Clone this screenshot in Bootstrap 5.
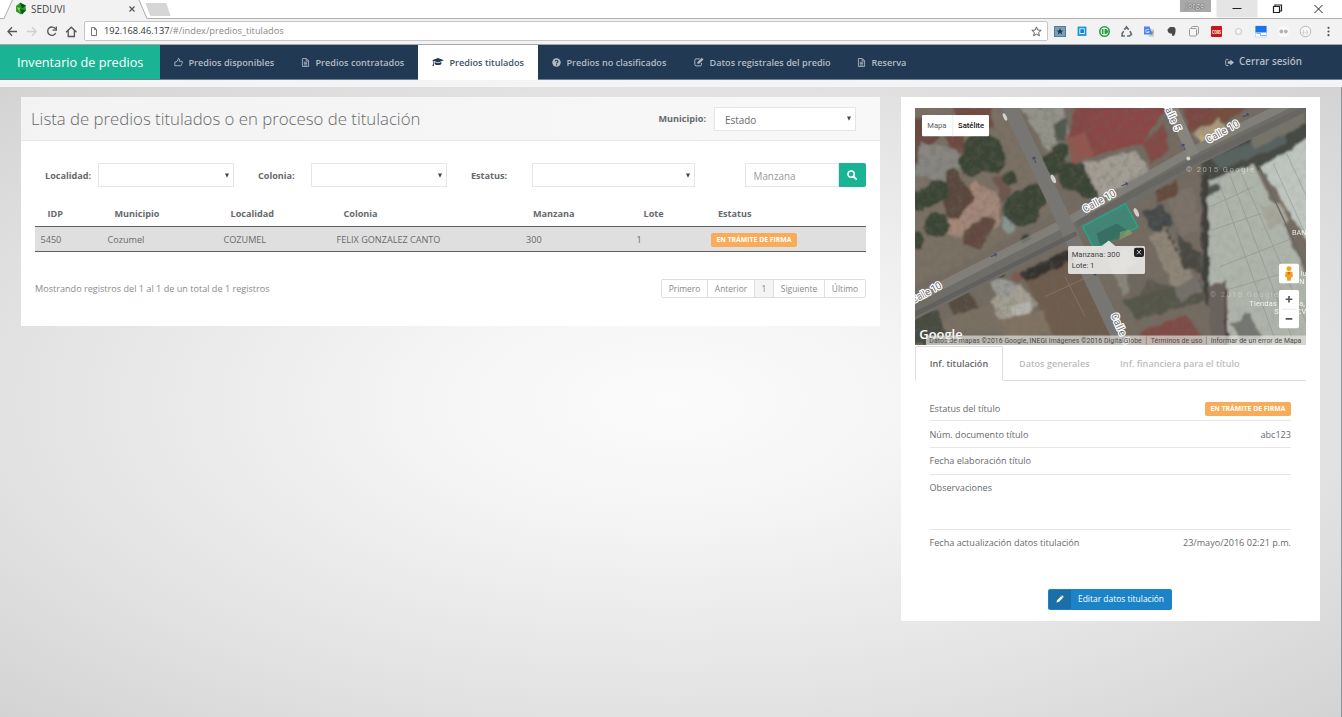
<!DOCTYPE html>
<html lang="es">
<head>
<meta charset="utf-8">
<title>SEDUVI</title>
<meta name="viewport" content="width=device-width, initial-scale=1">
<link href="https://cdn.jsdelivr.net/npm/bootstrap@5.3.0/dist/css/bootstrap.min.css" rel="stylesheet">
<style>
:root{--teal:#1ab394;--navy:#213953;--line:#e5e6e7;--ink:#676a6c}
html,body{height:100%;overflow:hidden}
body{font-family:"Open Sans","Noto Sans",sans-serif;font-size:9.1px;line-height:1.43;color:var(--ink);background:#fff;display:flex;flex-direction:column}
svg{display:block;flex:none}
/* browser frame */
.tabstrip{height:18.5px;background:#fff;border-bottom:1px solid #b0b0b0;position:relative;flex:none;padding-right:1.5px}
.tabshape{position:absolute;left:0;top:0}
.tabtext{font-size:10px;color:#444;line-height:18px;padding-left:31px;position:relative}
.wincontrols{height:17.5px}
.who{width:31px;height:12px;background:#a9a9a9;color:#f4f4f4;font-size:7.8px;line-height:11px;text-align:center;text-shadow:0 0 1px #222,0 0 1px #444}
.toolbar{height:26px;background:#f2f2f2;border-bottom:1.5px solid #a6a6a8;flex:none;padding-left:7px}
.omnibox{height:20px;background:#fff;border:1px solid #c6c6c6;border-radius:2px;margin:0 2px 0 7px;width:964px;padding:0 5px 0 6px;color:#888;font-size:9.25px}
.omnibox b{font-weight:400;color:#333}
/* application bar */
.appbar{height:35.5px;background:var(--navy);border-bottom:1px solid #6d8296;flex:none;padding:0}
.brandbox{width:160px;height:100%;background:var(--teal);color:#fff;font-size:12.7px;padding-left:17px}
.appbar .nav-link{height:34.5px;display:flex;align-items:center;font-size:9.13px;font-weight:600;color:#b3bcc5;padding:1px 0 0 14px;white-space:nowrap}
.appbar .nav-link svg{margin-right:5.5px;width:9px}
.appbar .nav-link.active{background:#fff;color:#3d5369;height:35.5px;padding-top:0}
.appbar .nav-link.active svg{color:var(--navy)}
.appbar .logout{font-size:9.8px;padding-right:40px}
.substrip{height:7px;background:#f4f4f4;flex:none}
.canvas{flex:1;background:radial-gradient(ellipse at 50% 50%,#fbfbfb 0%,#f5f5f5 25%,#e2e2e2 70%,#d3d3d3 100%);border-right:1px solid #8f959b;padding:10px 21px 0 21px}
.panel{background:#fff}
.listpanel{width:859px;height:229px}
.listhead{height:44px;background:linear-gradient(90deg,#f3f3f3,#f8f8f8);border-bottom:1px solid #e7e7e7;padding:0 24px 0 10px}
.listhead h1{font-size:16.78px;font-weight:300;margin:2px 0 0;white-space:nowrap}
.lbl{font-weight:700;white-space:nowrap}
.form-select,.form-control{height:24px;border:1px solid var(--line);border-radius:0;font-size:9.9px;color:var(--ink);padding:1px 10px 0;line-height:22px;min-height:0}
.form-select{--arr:url("data:image/svg+xml,%3Csvg xmlns='http://www.w3.org/2000/svg' viewBox='0 0 5 5'%3E%3Cpath d='M0 .3h5L2.5 5z' fill='%23444'/%3E%3C/svg%3E");background-image:var(--arr);background-size:4px 4.5px;background-position:right 4.5px center}
.form-control::placeholder{color:#9a9a9a}
.filters{height:24px;margin:22px 14px 0 24px}
.btn-go{width:27.5px;height:24px;background:var(--teal);border-radius:0 2px 2px 0;color:#fff;padding:0;display:flex;align-items:center;justify-content:center}
.grid-table{width:830.5px;margin:13px 0 0 14px;table-layout:fixed;border-collapse:collapse}
.grid-table th{height:26px;padding:1px 0 0 12.5px;font-weight:700;border-bottom:1px solid #5f6062}
.grid-table td{height:25.5px;padding:1.5px 0 0 5.5px;background:#e0dfe0;border-bottom:1px solid #5f6062}
.tag{display:inline-block;background:#f8ac59;color:#fff;font-weight:700;font-size:6.85px;line-height:14px;height:14px;width:86px;text-align:center;border-radius:2px;white-space:nowrap}
.foot{margin:26.5px 14px 0 14px;color:#8a8a8a}
.page-link{font-size:8.45px;line-height:17.5px;height:19.5px;padding:0;border-color:#dfdfdf;color:#888;text-align:center}
.page-item.active .page-link{background:#f4f4f4;border-color:#dfdfdf;color:#888}
.page-item:first-child .page-link{border-radius:2px 0 0 2px}.page-item:last-child .page-link{border-radius:0 2px 2px 0}
.sidepanel{width:419px;height:524px;padding:10.5px 14px 0 14px}
.mapbox{width:391px;height:237.5px;font-family:Roboto,sans-serif}
.nav-tabs{height:35.5px;margin-top:.5px;border-bottom:1px solid #dedede}
.nav-tabs .nav-link{font-weight:600;color:#bcbcbc;font-size:9.1px;padding:0;height:35.5px;line-height:34px;border-radius:2px 2px 0 0}
.nav-tabs .nav-link.active{width:88px;text-align:center;color:#666;border-color:#dedede #dedede #fff}
.facts{margin:15px 15px 0 14.5px}
.facts>div{height:26.6px;border-bottom:1px solid #e6e6e6}
.facts>.row-first{height:25.4px;padding-top:1px}
.facts>.tall{height:55px;padding-top:6.500px}
.btn-edit{width:124px;height:20.5px;background:#1c84c6;color:#fff;font-weight:400;font-size:8.45px;padding:0;border-radius:2px;display:flex;align-items:center;overflow:hidden;margin:33px 0 0 133px}
.btn-edit span{width:22px;height:100%;background:#1a6fa6;display:flex;align-items:center;justify-content:center}
</style>
</head>
<body>
<svg width="0" height="0" class="position-absolute">
  <symbol id="i-thumb" viewBox="0 0 16 16"><path d="M1.500 7h2.500l3-3.500.8-2.700c2 0 2.300 1.700 1.200 5H14c1 0 1.200 1.200.6 1.800.6.800.3 1.900-.4 2.200.2 1-.2 1.700-.9 1.900 0 1.400-.8 2.100-2 2.100H1.500z" fill="none" stroke="currentColor" stroke-width="1.600" stroke-linejoin="round"/></symbol>
  <symbol id="i-file" viewBox="0 0 16 16"><path d="M2.500 1h7l4 4v10h-11zM9.300 1v4.300h4.200M5 7.500h6M5 10h6M5 12.500h6" fill="none" stroke="currentColor" stroke-width="1.500"/></symbol>
  <symbol id="i-cap" viewBox="0 0 16 12"><path d="M8 0l8 3-8 3-8-3zM3.500 5.300L8 7l4.500-1.700V8c-1 1.800-8 1.800-9 0zM1.300 3.500h.9v4l.6 3H.7l.6-3z" fill="currentColor"/></symbol>
  <symbol id="i-help" viewBox="0 0 16 16"><circle cx="8" cy="8" r="7.500" fill="currentColor"/><path d="M5.600 6.200c.2-3 5.200-2.800 5 0-.1 1.700-2.500 1.700-2.500 3.600M8.100 11.300v2" fill="none" stroke="#213953" stroke-width="2"/></symbol>
  <symbol id="i-edit" viewBox="0 0 16 16"><path d="M12 9.500V12c0 1.400-.8 2.200-2.200 2.200H3.500C2.100 14.200 1.300 13.400 1.300 12V5.200C1.300 3.800 2.100 3 3.500 3H9" fill="none" stroke="currentColor" stroke-width="1.600"/><path d="M5.500 8.200L12.500 1.200l2.600 2.600-7 7H5.500z" fill="currentColor"/></symbol>
  <symbol id="i-out" viewBox="0 0 16 14"><path d="M6 1.500H3.500C2 1.500 1.200 2.300 1.200 3.800v6.400c0 1.500.8 2.300 2.300 2.300H6" fill="none" stroke="currentColor" stroke-width="1.600"/><path d="M5 4.800h4.500V1.500L16 7l-6.500 5.500V9.200H5z" fill="currentColor"/></symbol>
  <symbol id="i-search" viewBox="0 0 16 16"><circle cx="6.600" cy="6.600" r="5" fill="none" stroke="currentColor" stroke-width="2.600"/><path d="M10.400 10.400l4.200 4.200" stroke="currentColor" stroke-width="3" stroke-linecap="round"/></symbol>
  <symbol id="i-pen" viewBox="0 0 16 16"><path d="M1 15l1-4.600L10 2.400 13.600 6l-8 8zM11 1.500c.8-.8 1.600-.8 2.400 0l1.100 1.100c.8.800.8 1.600 0 2.400l-.4.400L10.600 1.900z" fill="currentColor"/></symbol>
</svg>

<header class="tabstrip d-flex justify-content-between">
  <svg class="tabshape" width="175" height="19" viewBox="0 0 175 19"><path d="M4 19L13 0H139L147 19z" fill="#f2f2f2"/><path d="M4 18.500L12.500 0M139 0l8 18.500" fill="none" stroke="#aaa"/><path d="M146 3.500h20l4 12h-19.500z" fill="#d6d6d6" stroke="#c8c8c8" stroke-width=".6"/>
    <path d="M16 6l4.500-3.500L25.500 5.500l.5 5-5 4-5-3z" fill="#2b9a2f"/><path d="M20 3l6 2.500-4 3z" fill="#0b4d1a"/><path d="M20 9l2 5.500 4-4z" fill="#0d5a1d"/><path d="M16.500 7l3.500 1-.5 4z" fill="#8fce3c"/>
    <path d="M129.500 6.500l5 5m0-5l-5 5" stroke="#555" stroke-width="1.200"/></svg>
  <div class="tabtext">SEDUVI</div>
  <div class="wincontrols d-flex">
    <div class="who">Jorge</div>
    <svg class="ms-1" width="126" height="17.500" viewBox="0 0 126 17.500"><path d="M1.500 0h41v17.500h-41z" fill="#e5e5e5"/><path d="M17.500 8.500h9" stroke="#222"/><path d="M58.500 6.500h6v6h-6zM60 6.500V5h6.500v6H65" fill="none" stroke="#222" stroke-width="1.200"/><path d="M99.500 5l8 8m0-8l-8 8" stroke="#222" stroke-width="1"/></svg>
  </div>
</header>

<div class="toolbar d-flex align-items-center">
  <svg width="70" height="18" viewBox="7 22 70 18" fill="none" stroke="#555" stroke-width="1.300"><path d="M17 31.500H8m4-4.200L8 31.500l4 4.200"/><path d="M27 31.500h9m-4-4.200l4.200 4.200L32 35.700" stroke="#cfcfcf"/><path d="M55.500 29a4.200 4.200 0 1 0 .2 4M56.300 26.500v3.700h-3.800"/><path d="M66 32.200l5.300-5L76.500 32.200M68.200 30.800v5.700h6.200v-5.700"/></svg>
  <div class="omnibox d-flex align-items-center justify-content-between flex-shrink-0">
    <div class="d-flex align-items-center"><svg width="6" height="9" viewBox="0 0 6 9" style="margin-right:7px"><path d="M.5.5h3l2 2v6h-5zM3.500.5v2h2" fill="none" stroke="#666" stroke-width=".9"/></svg><span><b>192.168.46.137</b>/#/index/predios_titulados</span></div>
    <svg width="11" height="11" viewBox="0 0 12 12"><path d="M6 1l1.400 3.400 3.700.3-2.800 2.400.9 3.600L6 8.800l-3.200 1.900.9-3.600L.9 4.700l3.700-.3z" fill="none" stroke="#555" stroke-width="1"/></svg>
  </div>
  <svg width="284" height="18" viewBox="1050 22 284 18">
    <rect x="1054.500" y="26.500" width="11" height="10" fill="#7ba0ba" stroke="#557a96"/><path d="M1060 28l1 2.500h2.600l-2.100 1.500.8 2.600-2.300-1.500-2.300 1.500.8-2.600-2.100-1.500h2.600z" fill="#1d3850"/>
    <rect x="1078.500" y="27.500" width="7" height="7.500" fill="#fff" stroke="#1597cf" stroke-width="1.800"/><rect x="1080.300" y="29.200" width="3.600" height="3.800" fill="#1680b8"/>
    <circle cx="1104.500" cy="31.500" r="4.700" fill="#fff" stroke="#21a047" stroke-width="1.600"/><rect x="1101.800" y="29" width="1.700" height="5" fill="#21a047"/><path d="M1104.500 29h1a2.500 2.500 0 0 1 0 5h-1z" fill="#21a047"/>
    <path d="M1124.300 29.800l2.200-2.800 2.200 2.800M1130 31.200l1.500 3.300-2 1.500h-2.500M1125 36h-3l.3-3 1.500-1.800" fill="none" stroke="#66707a" stroke-width="1.700"/>
    <path d="M1147 29h7v8h-5z" fill="#d2d2d2"/><path d="M1144 26.500h5.500l3 8H1144z" fill="#4c86ee"/><text x="1145" y="33" font-size="6" fill="#fff">G</text><path d="M1150 32h4m-2 0v3" stroke="#777" stroke-width=".8"/>
    <path d="M1167.500 29.500l2.500-2.500c2.500 0 5-.5 5.500 2 .3 3-.5 6.500-2 7-2 0-1-1.800-2-2.500-2 .5-4-1-4-4z" fill="#4a4a4a"/>
    <rect x="1191.500" y="26.500" width="7" height="7.500" rx="1" fill="#f6f6f6" stroke="#999"/><rect x="1189.500" y="28.500" width="7" height="7.500" rx="1" fill="#f6f6f6" stroke="#999"/>
    <rect x="1211" y="26" width="11" height="11" rx="1" fill="#c81717"/><text x="1212" y="33.500" font-size="4.800" font-weight="700" fill="#fff" textLength="9" lengthAdjust="spacingAndGlyphs">CORS</text>
    <circle cx="1238.500" cy="31.500" r="3" fill="#f4f4f4" stroke="#cfcfcf" stroke-width="1.200"/>
    <path d="M1255.500 26h11v11h-11z" fill="#fff" stroke="#a7c6f2" stroke-width=".6"/><path d="M1255.500 26h11v6.500h-11z" fill="#1a73e8"/><path d="M1256.500 33.500h4v2h5.500" fill="none" stroke="#7fb0f0" stroke-width="1"/>
    <circle cx="1283.500" cy="31.500" r="5.500" fill="#fafafa"/><circle cx="1281.300" cy="31.500" r="1.900" fill="#b3b3b3"/><circle cx="1285.800" cy="31.500" r="1.900" fill="#b3b3b3"/>
    <circle cx="1305.500" cy="31.500" r="5.300" fill="#f8f8f8" stroke="#b0b0b0" stroke-width=".9"/><text x="1302.200" y="33.500" font-size="5.500" fill="#999">{-}</text>
    <g fill="#555"><circle cx="1328.500" cy="27.800" r="1.100"/><circle cx="1328.500" cy="31.500" r="1.100"/><circle cx="1328.500" cy="35.200" r="1.100"/></g>
  </svg>
</div>

<nav class="appbar navbar navbar-expand align-items-stretch flex-nowrap">
  <div class="brandbox d-flex align-items-center">Inventario de predios</div>
  <div class="nav">
    <a class="nav-link" style="width:127px"><svg height="9"><use href="#i-thumb"/></svg>Predios disponibles</a>
    <a class="nav-link" style="width:131px"><svg height="9"><use href="#i-file"/></svg>Predios contratados</a>
    <a class="nav-link active" style="width:120px"><svg height="9" style="width:12px"><use href="#i-cap"/></svg>Predios titulados</a>
    <a class="nav-link" style="width:142px"><svg height="9"><use href="#i-help"/></svg>Predios no clasificados</a>
    <a class="nav-link" style="width:163px"><svg height="10" style="width:10px"><use href="#i-edit"/></svg>Datos registrales del predio</a>
    <a class="nav-link"><svg height="9"><use href="#i-file"/></svg>Reserva</a>
  </div>
  <div class="nav ms-auto"><a class="nav-link logout"><svg height="9"><use href="#i-out"/></svg>Cerrar sesión</a></div>
</nav>
<div class="substrip"></div>

<main class="canvas d-flex justify-content-between align-items-start">
  <section class="panel listpanel">
    <div class="listhead d-flex align-items-center">
      <h1>Lista de predios titulados o en proceso de titulación</h1>
      <label class="lbl ms-auto me-2">Municipio:</label>
      <select class="form-select flex-shrink-0" style="width:142px"><option>Estado</option></select>
    </div>
    <div class="filters d-flex align-items-center">
      <label class="lbl" style="width:53px">Localidad:</label><select class="form-select" style="width:136px"></select>
      <label class="lbl" style="width:53px;margin-left:24px">Colonia:</label><select class="form-select" style="width:136px"></select>
      <label class="lbl" style="width:61px;margin-left:24px">Estatus:</label><select class="form-select" style="width:163px"></select>
      <div class="d-flex ms-auto"><input class="form-control" style="width:94px;padding-left:8px" placeholder="Manzana"><button class="btn btn-go"><svg width="10" height="10"><use href="#i-search"/></svg></button></div>
    </div>
    <table class="grid-table">
      <colgroup><col style="width:67px"><col style="width:116px"><col style="width:113px"><col style="width:189.500px"><col style="width:110.500px"><col style="width:74.500px"><col></colgroup>
      <thead><tr><th>IDP</th><th>Municipio</th><th>Localidad</th><th>Colonia</th><th>Manzana</th><th>Lote</th><th>Estatus</th></tr></thead>
      <tbody><tr><td>5450</td><td>Cozumel</td><td>COZUMEL</td><td>FELIX GONZALEZ CANTO</td><td>300</td><td>1</td><td><span class="tag">EN TRÁMITE DE FIRMA</span></td></tr></tbody>
    </table>
    <div class="foot d-flex justify-content-between align-items-center">
      <span>Mostrando registros del 1 al 1 de un total de 1 registros</span>
      <ul class="pagination m-0">
        <li class="page-item"><a class="page-link" style="width:47px">Primero</a></li>
        <li class="page-item"><a class="page-link" style="width:48px">Anterior</a></li>
        <li class="page-item active"><a class="page-link" style="width:20px">1</a></li>
        <li class="page-item"><a class="page-link" style="width:52px">Siguiente</a></li>
        <li class="page-item"><a class="page-link" style="width:42px">Último</a></li>
      </ul>
    </div>
  </section>

  <section class="panel sidepanel">
    <svg class="mapbox" viewBox="15 23 1173 714" preserveAspectRatio="none">
      <defs>
        <filter id="soft" x="-2%" y="-2%" width="104%" height="104%"><feTurbulence type="fractalNoise" baseFrequency=".035" numOctaves="3" seed="4" result="n"/><feDisplacementMap in="SourceGraphic" in2="n" scale="18" xChannelSelector="R" yChannelSelector="G" result="d"/><feGaussianBlur in="d" stdDeviation="3"/></filter>
        <filter id="grit" x="0" y="0" width="100%" height="100%"><feTurbulence type="fractalNoise" baseFrequency=".05" numOctaves="4" seed="9"/><feColorMatrix values="0 0 0 0 .14  0 0 0 0 .14  0 0 0 0 .12  1.800 0 0 0 -.75"/></filter>
      </defs>
      <rect x="15" y="23" width="1173" height="714" fill="#746b61"/>
      <g filter="url(#soft)">
        <!-- north-west blocks -->
        <path d="M0 0h290l150 330-320 180L0 560z" fill="#7a7063"/>
        <path d="M130 20h110l10 60-110 20z" fill="#74483f"/><path d="M0 60l40-10 50 60-60 90-40 10z" fill="#6a463f"/><path d="M100 100l60 0 10 60-50-10z" fill="#6e4840"/>
        <path d="M30 125l110 20 20 50-60 50-85-20z" fill="#878680"/>
        <path d="M190 240l80 50 0 90-100 40-70-20 20-60z" fill="#a38779"/>
        <path d="M105 215l30-10 60 90-50 60-40-10z" fill="#5a463d"/><path d="M160 390l60-40 40 10-50 90-50-20z" fill="#62493f"/>
        <path d="M250 230l45-10 10 50-30 40z" fill="#6e564d"/><ellipse cx="297" cy="370" rx="22" ry="28" fill="#87958f"/>
        <g fill="#3b4434"><circle cx="215" cy="155" r="58"/><circle cx="185" cy="190" r="38"/><circle cx="250" cy="180" r="38"/><circle cx="335" cy="325" r="55"/><circle cx="375" cy="290" r="40"/><circle cx="80" cy="375" r="38"/><circle cx="85" cy="275" r="34"/><circle cx="50" cy="290" r="30"/><circle cx="300" cy="235" r="20"/><circle cx="25" cy="300" r="30"/><circle cx="15" cy="420" r="28"/><circle cx="430" cy="190" r="36"/><circle cx="490" cy="230" r="44"/><circle cx="540" cy="255" r="42"/><circle cx="450" cy="150" r="25"/><circle cx="350" cy="420" r="16"/></g>
        <!-- roofs along the north side -->
        <path d="M330 20h130l20 95-70 35z" fill="#94938a"/><path d="M430 70l40-20 0 70-30 10z" fill="#535850"/>
        <path d="M490 20h280l-70 100-190 60-40-60 15-40z" fill="#844644"/><path d="M530 40l150-20 80 10-60 100-140 30z" fill="#8a4644"/>
        <path d="M470 110l60-10 20 70-60 20z" fill="#92564f"/><path d="M700 130l60-60 20 80-60 40z" fill="#834844"/>
        <path d="M515 190l160-40 45 60-150 90z" fill="#a39e94"/>
        <path d="M820 23h190l-90 60-80 10z" fill="#75503f"/><path d="M820 23h110l-60 50-30 10z" fill="#7b4642"/><path d="M850 95l80-40 30 45-80 40z" fill="#a89a80"/><path d="M870 110l20 30m0-40l20 30m0-45l20 35" stroke="#c4ad68" stroke-width="8"/>
        <!-- warehouses to the east -->
        <path d="M870 180l330-160v150l-310 80z" fill="#474a45"/><path d="M900 170l220-80 10 40-200 80z" fill="#59625f"/>
        <path d="M880 250l150-60 170 350v200H960l-75-200z" fill="#afb4aa"/>
        <path d="M1050 200l150-90v320z" fill="#bec6bf"/><path d="M1050 320l60-10 30 50-60 30z" fill="#a7a69a"/>
        <path d="M1190 20v50l-160 80-10-40z" fill="#74736b"/>
        <path d="M895 260l35-15 5 20-45 25z" fill="#4f5451"/>
        <path d="M872 220l22 0 5 400-20-30z" fill="#3f403b"/><path d="M895 560l55-20 5 190-50 0z" fill="#6a625b"/><path d="M945 540l12 200-12 0z" fill="#3c3832"/>
        <path d="M965 670l50-30 40 70-60 20z" fill="#747772"/>
        <!-- centre blocks -->
        <path d="M695 340l60-30 35 60-50 40z" fill="#444849"/><path d="M770 290l80-30 20 130-60 20z" fill="#7d726b"/><path d="M740 270l60-30 10 40-70 30z" fill="#65493e"/>
        <path d="M720 410l50-30 80 160-60 30z" fill="#8e8577"/><path d="M760 370l70 140" stroke="#454137" stroke-width="8" stroke-dasharray="14 6"/><path d="M800 400l70 60 10 60-60-20z" fill="#4a4a42"/>
        <path d="M590 470l60-30 60 90-70 60z" fill="#8a867c"/><path d="M650 500l40-10 40 80-70 30z" fill="#6e675e"/><path d="M710 540l80 20 0 50-110 30z" fill="#5b5950"/><path d="M640 600l230-60 20 60-210 60z" fill="#54564a"/><path d="M790 560l70-30 20 40-70 40z" fill="#74716b"/>
        <path d="M700 690l130-45 60 90H680z" fill="#804c46"/>
        <!-- south-west blocks -->
        <path d="M340 530l150-60 130 240H430z" fill="#6e5b4d"/><path d="M330 520l150-75 20 30-150 70z" fill="#34332f"/>
        <path d="M240 600l90-50 50 60-40 60-70-10z" fill="#a39f92"/><path d="M300 620l60-20 10 50-50 40z" fill="#b6b4ad"/>
        <path d="M110 600l60-35 40 60-80 20z" fill="#574b41"/><path d="M130 645l120-30 30 80H60z" fill="#7a6f62"/><path d="M15 640l70-10 30 100H0z" fill="#474b40"/>
        <path d="M240 550l30-20 50 25-20 40-40 0z" fill="#9a9a95"/><circle cx="320" cy="530" r="16" fill="#7b5851"/><circle cx="272" cy="520" r="12" fill="#413f3d"/><path d="M270 660l130-30 20 70-130 30z" fill="#817364"/>
      </g>
      <rect x="15" y="23" width="865" height="714" filter="url(#grit)" opacity=".42"/>
      <rect x="880" y="23" width="308" height="714" filter="url(#grit)" opacity=".12"/>
      <!-- streets -->
      <path d="M-10 640L480 390 850 170 1230 -20" stroke="#6f6d68" stroke-width="58" fill="none"/>
      <path d="M-10 610L475 362 840 155 1230 -35" stroke="#8b8982" stroke-width="25" fill="none" opacity=".65"/>
      <path d="M290 0L470 380 650 760" stroke="#777673" stroke-width="44" fill="none"/>
      <path d="M780 10L850 165" stroke="#86847c" stroke-width="34" fill="none"/>
      <path d="M-10 655L500 400" stroke="#5d5b59" stroke-width="14" opacity=".7"/>
      <path d="M500 372L860 180l340-160" stroke="#656461" stroke-width="18" fill="none" opacity=".7"/>
      <g stroke="#858a82" stroke-width="2" opacity=".7"><path d="M925 240l170 480M960 225l190 500M990 210l200 460M900 320l130-60M905 390l150-50M930 500l230-90M950 570l170-50M1090 190l100 220M1130 160l60 130"/></g>
      <path d="M1045 195l140 300" stroke="#656a64" stroke-width="4"/>
      <path d="M465 530l60 120M405 590l130-60" stroke="#8c7b6b" stroke-width="3" opacity=".7"/>
      <g fill="#d2d2cc"><ellipse cx="285" cy="50" rx="5" ry="12" transform="rotate(-25 285 50)"/><ellipse cx="430" cy="236" rx="6" ry="14" transform="rotate(-25 430 236)"/><ellipse cx="679" cy="337" rx="6" ry="14" transform="rotate(-25 679 337)"/><circle cx="835" cy="175" r="6"/></g>
      <g fill="#393f70" font-family="DejaVu Sans,sans-serif" font-size="28"><text transform="translate(244 479) rotate(-24)">→</text><text transform="translate(637 266) rotate(-24)">→</text><text transform="translate(1000 58) rotate(-24)">→</text><text transform="translate(386 187) rotate(-112)">→</text><text transform="translate(834 148) rotate(-112)">→</text><text transform="translate(540 510) rotate(66)">→</text></g>
      <path d="M518 379l128-68 38 70-118 60-16 0z" fill="#259680" fill-opacity=".62" stroke="#18b28c" stroke-width="3.500"/>
      <path d="M560 400l60-30 30 20-10 20-70 25z" fill="#2c5a50" opacity=".5"/><path d="M630 396l28-8 10 12-40 20z" fill="#93a36a" opacity=".6"/>
      <g fill="#6d6d70" stroke="#fff" stroke-width="7" stroke-linejoin="round" paint-order="stroke" font-size="30">
        <text transform="translate(525 338) rotate(-29)" textLength="108">Calle 10</text>
        <text transform="translate(895 129) rotate(-29)" textLength="108">Calle 10</text>
        <text transform="translate(10 611) rotate(-29)" textLength="100">Calle 10</text>
        <text transform="translate(757 8) rotate(66)" textLength="95">Calle 5</text>
        <text transform="translate(602 645) rotate(66)" textLength="98">Calle 5</text>
      </g>
      <g fill="#fff" opacity=".45" font-size="23"><text x="828" y="214" textLength="204">© 2015 Google</text><text x="900" y="592" textLength="204" opacity=".6">© 2015 Google</text></g>
      <g fill="#fff" opacity=".85" font-size="22"><text x="1146" y="405">BAN</text><text x="1018" y="619" textLength="82">Tiendas</text><text x="1168" y="619">a,</text><text x="1093" y="642">S</text><text x="1160" y="642">CV</text><text x="1172" y="527">lu</text><text x="1168" y="551">N</text></g>
      <text x="28" y="717" fill="#fff" font-family="Open Sans,sans-serif" font-weight="600" font-size="36" textLength="130" lengthAdjust="spacingAndGlyphs">Google</text>
      <rect x="48" y="707" width="1140" height="30" fill="#e4e4e0" fill-opacity=".68"/>
      <g fill="#4a4a4a" font-size="20.500"><text x="58" y="728" textLength="637">Datos de mapas ©2016 Google, INEGI Imágenes ©2016 DigitalGlobe</text><text x="722" y="728" textLength="155">Términos de uso</text><text x="902" y="728" textLength="272">Informar de un error de Mapa</text></g>
      <path d="M709 710v24M889 710v24" stroke="#777" stroke-width="2"/>
      <rect x="36" y="44" width="201" height="64" rx="4" fill="#fff"/><path d="M128 44v64" stroke="#e5e5e5" stroke-width="2"/>
      <text x="52" y="84" font-size="23" fill="#606060" textLength="57">Mapa</text><text x="144" y="84" font-size="23" font-weight="500" fill="#111" textLength="78">Satélite</text>
      <path d="M479 438H576l20-17 20 17h84q5 0 5 5v74q0 5-5 5H479q-5 0-5-5v-74q0-5 5-5z" fill="#f2f2f0" fill-opacity=".85"/>
      <text x="485" y="471" font-size="23" fill="#444" textLength="145">Manzana: 300</text><text x="485" y="503" font-size="23" fill="#444" textLength="68">Lote: 1</text>
      <rect x="672" y="443" width="30" height="28" rx="6" fill="#222"/><path d="M681 450l12 13m0-13l-12 13" stroke="#eee" stroke-width="2.500"/>
      <rect x="1107" y="491" width="60" height="59" rx="5" fill="#fff"/><circle cx="1137" cy="506" r="7.500" fill="#f0a81b"/><path d="M1127 515h20l2 15-5 2-2 10h-10l-2-10-5-2z" fill="#f0a020"/><path d="M1133 517h8l-4 8z" fill="#b86c0c"/>
      <rect x="1107" y="570" width="60" height="115" rx="5" fill="#fff"/><path d="M1116 628h42" stroke="#ddd" stroke-width="2"/><path d="M1127 598h20m-10-10v20M1127 657h20" stroke="#555" stroke-width="5"/>
    </svg>
    <ul class="nav nav-tabs flex-nowrap">
      <li class="nav-item"><a class="nav-link active">Inf. titulación</a></li>
      <li class="nav-item" style="margin-left:15px"><a class="nav-link">Datos generales</a></li>
      <li class="nav-item" style="margin-left:28.500px"><a class="nav-link">Inf. financiera para el título</a></li>
    </ul>
    <div class="facts">
      <div class="row-first d-flex justify-content-between align-items-center"><span>Estatus del título</span><span class="tag">EN TRÁMITE DE FIRMA</span></div>
      <div class="d-flex justify-content-between align-items-center"><span>Núm. documento título</span><span>abc123</span></div>
      <div class="d-flex align-items-center"><span>Fecha elaboración título</span></div>
      <div class="tall d-flex align-items-start"><span>Observaciones</span></div>
      <div class="d-flex justify-content-between align-items-center border-0"><span>Fecha actualización datos titulación</span><span>23/mayo/2016 02:21 p.m.</span></div>
    </div>
    <button class="btn btn-edit"><span><svg width="8" height="8"><use href="#i-pen"/></svg></span><em class="fst-normal mx-auto">Editar datos titulación</em></button>
  </section>
</main>
<script src="https://cdn.jsdelivr.net/npm/bootstrap@5.3.0/dist/js/bootstrap.bundle.min.js"></script>
</body>
</html>
